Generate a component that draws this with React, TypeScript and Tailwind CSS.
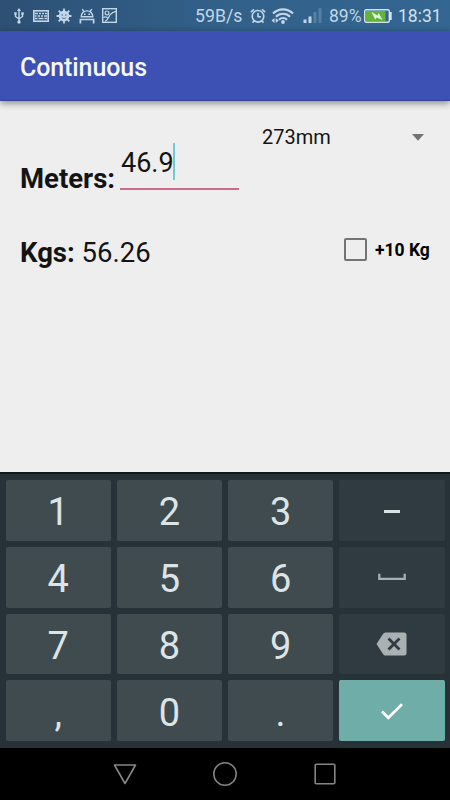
import { useState } from 'react';
import type { ReactNode } from 'react';
import clsx from 'clsx';

type Key = {
    id: string;
    label: ReactNode;
    kind?: 'side' | 'done';
};

const keys: Key[] = [
    { id: '1', label: '1' },
    { id: '2', label: '2' },
    { id: '3', label: '3' },
    { id: '-', label: <span className="block w-4 h-[3px] mt-[3px] bg-[#d9e1e2]" />, kind: 'side' },
    { id: '4', label: '4' },
    { id: '5', label: '5' },
    { id: '6', label: '6' },
    { id: 'space', label: <SpaceIcon />, kind: 'side' },
    { id: '7', label: '7' },
    { id: '8', label: '8' },
    { id: '9', label: '9' },
    { id: 'back', label: <BackspaceIcon />, kind: 'side' },
    { id: ',', label: ',' },
    { id: '0', label: '0' },
    { id: '.', label: '.' },
    { id: 'done', label: <DoneIcon />, kind: 'done' },
];

function SpaceIcon() {
    return (
        <svg width="28" height="8" viewBox="0 0 28 8" className="-mt-[1px]">
            <path d="M1.300 .8v5h25.400v-5" fill="none" stroke="#a7afb2" strokeWidth="2.300" />
        </svg>
    );
}

function BackspaceIcon() {
    return (
        <svg width="31" height="24" viewBox="0 0 31 24">
            <path d="M9.500 .5H28a2.500 2.500 0 0 1 2.500 2.500v18a2.500 2.500 0 0 1-2.500 2.500H9.500Q8 23.500 7 22L.5 12 7 2Q8 .5 9.500 .5Z" fill="#a9b1b3" />
            <path d="m12.500 6.500 11 11m0-11-11 11" stroke="#303b41" strokeWidth="2.800" fill="none" />
        </svg>
    );
}

function DoneIcon() {
    return (
        <svg width="22" height="17" viewBox="0 0 22 17" className="mt-[1px]">
            <path d="m1 8.500 6.300 6.300L21 1.200" stroke="#fff" strokeWidth="2.700" fill="none" />
        </svg>
    );
}

function UsbIcon() {
    return (
        <svg width="10" height="16" viewBox="0 0 10 16" fill="none" stroke="currentColor" strokeWidth="1.400">
            <path d="M5 2v12M1.500 6v2.500L5 11l3.500-2.500V5.500" />
            <path d="M5 0 7 3H3Z" fill="currentColor" stroke="none" />
            <circle cx="5" cy="14" r="1.700" fill="currentColor" stroke="none" />
            <path d="M.3 4.300h2.400v2.400H.3zM7.300 4.300h2.400v2.400H7.300z" fill="currentColor" stroke="none" />
        </svg>
    );
}

function KeyboardIcon() {
    return (
        <svg width="16" height="12" viewBox="0 0 16 12" fill="none" stroke="currentColor">
            <rect x=".8" y=".8" width="14.400" height="10.400" strokeWidth="1.600" />
            <path d="M2 3.600h3m1 0h2m1 0h2m1 0h2M2 6h1.500m1 0h2.500m1 0h2m1 0h3M2 8.500h2.500m1 0h5m1 0h2.500" strokeWidth="1.500" />
        </svg>
    );
}

function BugIcon() {
    return (
        <svg width="16" height="16" viewBox="0 0 16 16">
            <path d="M8 .5v15M.5 8h15M2.700 2.700l10.600 10.600M13.300 2.700 2.700 13.300" stroke="currentColor" strokeWidth="1.800" />
            <circle cx="8" cy="8" r="5.400" fill="currentColor" />
            <circle cx="6.200" cy="7" r=".7" fill="#31597f" />
            <circle cx="9.800" cy="7" r=".7" fill="#31597f" />
            <path d="M5.800 9.800q2.200 1.600 4.400 0" stroke="#31597f" strokeWidth=".7" fill="none" />
        </svg>
    );
}

function AndroidIcon() {
    return (
        <svg width="16" height="16" viewBox="0 0 16 16" fill="none" stroke="currentColor" strokeWidth="1.400">
            <path d="M2.200 8.700a5.800 5.800 0 0 1 11.600 0ZM4.900 3.800 3.300 1M11.100 3.800 12.700 1" />
            <path d="M1.400 15.500v-4h13.200v4" strokeWidth="1.700" />
            <path d="M5 5.500h1.600v1.500H5zM9.400 5.500H11v1.500H9.400z" fill="currentColor" stroke="none" />
        </svg>
    );
}

function PictureIcon() {
    return (
        <svg width="15" height="15" viewBox="0 0 15 15" fill="none" stroke="currentColor" strokeWidth="1.200">
            <rect x=".7" y=".7" width="13.600" height="13.600" strokeWidth="1.400" />
            <circle cx="5" cy="4.900" r="1.900" />
            <path d="M3 13.500C6.500 12 6.500 8.500 8.500 6.300S12 4 14 3.500M1.500 9.500Q4 8 6.300 10.500" />
        </svg>
    );
}

function AlarmIcon() {
    return (
        <svg width="16" height="16" viewBox="0 0 16 16" fill="none" stroke="currentColor" strokeWidth="1.600">
            <circle cx="8" cy="8.300" r="5.800" />
            <path d="M8 5v3.800h3M.8 4.200 4 1.300M15.200 4.200 12 1.300M4 13l-1.500 1.600M12 13l1.500 1.600" />
        </svg>
    );
}

function WifiIcon() {
    return (
        <svg width="23" height="16" viewBox="0 0 23 16" fill="none" stroke="currentColor" strokeWidth="2.200">
            <path d="M2 5.500a14 14 0 0 1 20 0M5 8.700a9.800 9.800 0 0 1 14 0M8 11.700a5.600 5.600 0 0 1 8 0" />
            <circle cx="12" cy="14" r="1.900" fill="currentColor" stroke="none" />
            <path d="M3.500 10v5L.5 12.500ZM4.700 10v5l3-2.500Z" fill="currentColor" stroke="none" />
        </svg>
    );
}

function SignalIcon() {
    return (
        <svg width="19" height="16" viewBox="0 0 19 16" fill="currentColor">
            <path d="M.5 11.500h3V15h-3zM5.500 8.500h3V15h-3z" />
            <path d="M10.500 4h3v11h-3zM15.500 .3h3V15h-3z" opacity=".25" />
        </svg>
    );
}

function BatteryIcon() {
    return (
        <svg width="28" height="14" viewBox="0 0 28 14">
            <rect x=".7" y=".7" width="24.600" height="12.600" rx="1.500" fill="none" stroke="#d5e4f0" strokeWidth="1.400" />
            <rect x="2" y="2" width="19.500" height="10" fill="#64b43c" />
            <path d="M26 3h1.700v8H26z" fill="#d5e4f0" />
            <path d="m7.500 3 6 3.400 1.200-2.400L18.500 11l-5.700-2.500L11.200 10.500Z" fill="#e5f2e4" />
        </svg>
    );
}

function StatusBar() {
    return (
        <div className="h-[31px] flex items-center pl-[14px] pr-[9px] text-[#c3d6e7] bg-linear-to-r from-[#2d5074] via-[#32618a] to-[#336691]">
            <UsbIcon />
            <div className="flex items-center ml-[9px] gap-[7px]">
                <KeyboardIcon />
                <BugIcon />
                <AndroidIcon />
                <PictureIcon />
            </div>
            <div className="flex items-center ml-auto text-lg leading-[31px] pt-[1px]">
                <span className="w-[47px] mr-2 pt-[1px] text-[17.700px]">59B/s</span>
                <AlarmIcon />
                <span className="ml-[5px]"><WifiIcon /></span>
                <span className="ml-[9px]"><SignalIcon /></span>
                <span className="ml-[7px] w-[34px] pt-[1px] text-[17.500px]">89%</span>
                <span className="ml-[1px]"><BatteryIcon /></span>
                <span className="ml-[6px] w-[43px] pt-[1px] text-[#d3e1ed] text-[17.500px]">18:31</span>
            </div>
        </div>
    );
}

function NavBar() {
    return (
        <div className="h-[52px] flex items-center justify-center gap-[76px] bg-black text-[#858585]">
            <svg width="24" height="24" viewBox="0 0 24 24" fill="none" stroke="currentColor" strokeWidth="1.600" strokeLinejoin="round">
                <path d="M1.500 3h21L12 21.500Z" />
            </svg>
            <svg width="24" height="24" viewBox="0 0 24 24" fill="none" stroke="currentColor" strokeWidth="1.500">
                <circle cx="12" cy="12" r="11.200" />
            </svg>
            <svg width="24" height="24" viewBox="0 0 24 24" fill="none" stroke="currentColor" strokeWidth="1.600">
                <rect x="2.200" y="2.200" width="19.600" height="19.600" rx="1" />
            </svg>
        </div>
    );
}

export default function App() {
    const [meters, setMeters] = useState('46.9');
    const [extra, setExtra] = useState(false);

    const kgs = meters === '46.9' ? 56.26 : Number(meters) * 1.1996;

    const pressKey = (id: string) => {
        if (id === 'back') setMeters(meters.slice(0, -1));
        else if (/^[0-9.]$/.test(id)) setMeters(meters + id);
    };

    return (
        <div className="w-[450px] h-[800px] flex flex-col overflow-hidden bg-[#eeeeee] font-[Roboto,sans-serif]">
            <StatusBar />
            <header className="h-[70px] flex items-center pl-5 pt-[5px] bg-[#3d50b3] border-b border-[#34449a] shadow-[0_2px_7px_rgba(0,0,0,0.45)]">
                <h1 className="text-[25px] leading-8 font-medium tracking-[-0.100px] text-[#f7f8fd]">Continuous</h1>
            </header>

            <main className="h-[371px] px-5 text-[#141414]">
                <div className="h-[136px] flex items-start">
                    <label className="w-[100px] mt-[62px] text-[27.500px] leading-8 font-bold">Meters:</label>
                    <div className="w-[119px] h-12 mt-[41px] flex items-start border-b-2 border-[#d2688a]">
                        <span className="pt-[2px] pl-[1px] text-[27px] leading-[38px]">{meters}</span>
                        <span className="w-[2px] h-[37px] mt-[1px] -ml-[1px] bg-[#6fcbd3]" />
                    </div>
                    <div className="flex-1 flex items-center justify-between mt-6 pl-[23px] pr-[6px]">
                        <span className="text-[20px] leading-6">273mm</span>
                        <svg width="12" height="7" viewBox="0 0 12 7"><path d="M0 0h12L6 6.700Z" fill="#737373" /></svg>
                    </div>
                </div>
                <div className="flex items-start justify-between">
                    <div className="text-[27.500px] leading-8 whitespace-pre">
                        <b>Kgs:</b> {(kgs + (extra ? 10 : 0)).toFixed(2)}
                    </div>
                    <div className="flex items-center mt-[1px]" onClick={() => setExtra(!extra)}>
                        <span className={clsx('w-[23px] h-[23px] -mt-[1px] border-2 border-[#737373] rounded-[2px]', extra && 'bg-[#d2688a]')} />
                        <span className="ml-2 w-[55px] whitespace-nowrap text-[17.500px] leading-6 font-bold text-black">+10 Kg</span>
                    </div>
                </div>
            </main>

            <div className="h-[276px] border-t-2 border-[#10181c] bg-[#263238] px-[5.500px] pt-[6px] pb-[7px] grid grid-cols-4 grid-rows-4 gap-[6px]">
                {keys.map((key) => (
                    <button
                        key={key.id}
                        onClick={() => pressKey(key.id)}
                        className={clsx(
                            'flex items-center justify-center rounded-[2px] text-[38px] leading-[44px] text-[#dce4e6] min-h-0',
                            key.kind === 'side' && 'bg-[#303b41]',
                            key.kind === 'done' && 'bg-[#6fada8]',
                            !key.kind && 'bg-[#404b50] pt-[4px]',
                        )}
                    >
                        {key.label}
                    </button>
                ))}
            </div>
            <NavBar />
        </div>
    );
}
